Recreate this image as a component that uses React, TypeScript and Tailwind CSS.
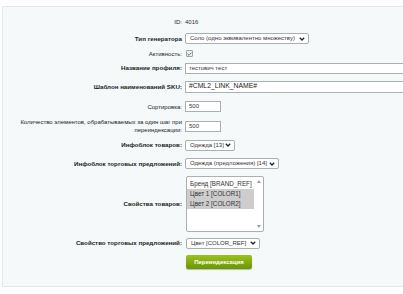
import React from 'react';

const font = { fontFamily: '"Liberation Sans", Arial, sans-serif' };

function Chevron() {
  return (
    <svg width="6" height="4" viewBox="0 0 6 4" className="shrink-0">
      <path d="M0.8 0.8 L3 3 L5.2 0.8" fill="none" stroke="#222" strokeWidth="1.3" />
    </svg>
  );
}

function Row({
  label,
  bold,
  h,
  children,
}: {
  label: React.ReactNode;
  bold?: boolean;
  h: string;
  children: React.ReactNode;
}) {
  return (
    <div className={`flex items-center ${h}`}>
      <div
        className={`w-[179px] shrink-0 whitespace-nowrap text-right leading-[8px] text-[#222] ${bold ? 'text-[6.2px] font-bold' : 'text-[6px]'}`}
      >
        {label}
      </div>
      <div className="ml-[3px] flex items-center">{children}</div>
    </div>
  );
}

function Select({ value, w }: { value: string; w: string }) {
  return (
    <div
      className={`flex h-[11px] ${w} items-center justify-between rounded-[2px] border border-[#a9b0b3] bg-white pl-[4px] pr-[3px] text-[6px] text-[#333]`}
    >
      <span className="whitespace-nowrap">{value}</span>
      <Chevron />
    </div>
  );
}

function TextInput({ value, w }: { value: string; w: string }) {
  return (
    <div
      className={`flex h-[11px] ${w} items-center border border-[#a9b0b3] bg-white pl-[3px] text-[6px] text-[#333]`}
    >
      {value}
    </div>
  );
}

export default function App() {
  return (
    <div className="h-[294px] w-[403px] overflow-hidden bg-white" style={font}>
      <div className="ml-[2px] mt-[6px] w-[460px] border border-[#e3e8e8] bg-[#f5f9f9] pb-[13px] pt-[7px]">
        <Row label="ID:" h="h-[16px]">
          <span className="text-[6px] text-[#333]">4016</span>
        </Row>
        <Row label="Тип генератора" bold h="h-[17px]">
          <Select value="Соло (одно эквивалентно множеству)" w="w-[124px]" />
        </Row>
        <Row label="Активность:" h="h-[13px]">
          <div className="ml-[1px] flex h-[7px] w-[7px] items-center justify-center rounded-[1px] border border-[#9aa3a6] bg-[#eef2f3]">
            <svg width="5" height="4" viewBox="0 0 5 4">
              <path d="M0.6 2 L2 3.3 L4.4 0.7" fill="none" stroke="#4a5a60" strokeWidth="0.9" />
            </svg>
          </div>
        </Row>
        <Row label="Название профиля:" bold h="h-[16px]">
          <TextInput value="тестович тест" w="w-[260px]" />
        </Row>
        <Row label="Шаблон наименований SKU:" bold h="h-[21px]">
          <div className="flex h-[12px] w-[260px] items-center border border-[#a9b0b3] bg-white pl-[3px] text-[6.8px] text-[#222]">
            #CML2_LINK_NAME#
          </div>
        </Row>
        <Row label="Сортировка:" h="h-[19px]">
          <TextInput value="500" w="w-[36px]" />
        </Row>
        <Row
          label={
            <>
              Количество элементов, обрабатываемых за один шаг при
              <br />
              переиндексации:
            </>
          }
          h="h-[20px]"
        >
          <TextInput value="500" w="w-[36px]" />
        </Row>
        <Row label="Инфоблок товаров:" bold h="h-[18px]">
          <Select value="Одежда [13]" w="w-[50px]" />
        </Row>
        <Row label="Инфоблок торговых предложений:" bold h="h-[19px]">
          <Select value="Одежда (предложения) [14]" w="w-[94px]" />
        </Row>
        <Row label="Свойства товаров:" bold h="h-[62px]">
          <div className="ml-[1px] flex h-[56px] w-[78px] rounded-[2px] border border-[#a9b0b3] bg-white text-[6.3px] leading-[10px] text-[#333]">
            <div className="flex-1 pt-[2px]">
              <div className="pl-[3px]">Бренд [BRAND_REF]</div>
              <div className="bg-[#cdcdcd] pl-[3px]">Цвет 1 [COLOR1]</div>
              <div className="bg-[#cdcdcd] pl-[3px]">Цвет 2 [COLOR2]</div>
            </div>
            <div className="flex w-[9px] flex-col items-center justify-between py-[3px]">
              <svg width="4" height="3" viewBox="0 0 4 3">
                <path d="M0 3 L2 0 L4 3 Z" fill="#9a9a9a" />
              </svg>
              <svg width="4" height="3" viewBox="0 0 4 3">
                <path d="M0 0 L2 3 L4 0 Z" fill="#9a9a9a" />
              </svg>
            </div>
          </div>
        </Row>
        <Row label="Свойство торговых предложений:" bold h="h-[16px]">
          <div className="ml-[1px]">
            <Select value="Цвет [COLOR_REF]" w="w-[74px]" />
          </div>
        </Row>
        <Row label="" h="h-[22px]">
          <div className="ml-[1px] flex h-[14px] w-[66px] items-center justify-center rounded-[2px] bg-gradient-to-b from-[#9cc21e] to-[#6c9600] text-[6px] font-bold text-white shadow-[0_1px_1px_rgba(0,0,0,0.25)]">
            Переиндексация
          </div>
        </Row>
      </div>
    </div>
  );
}
